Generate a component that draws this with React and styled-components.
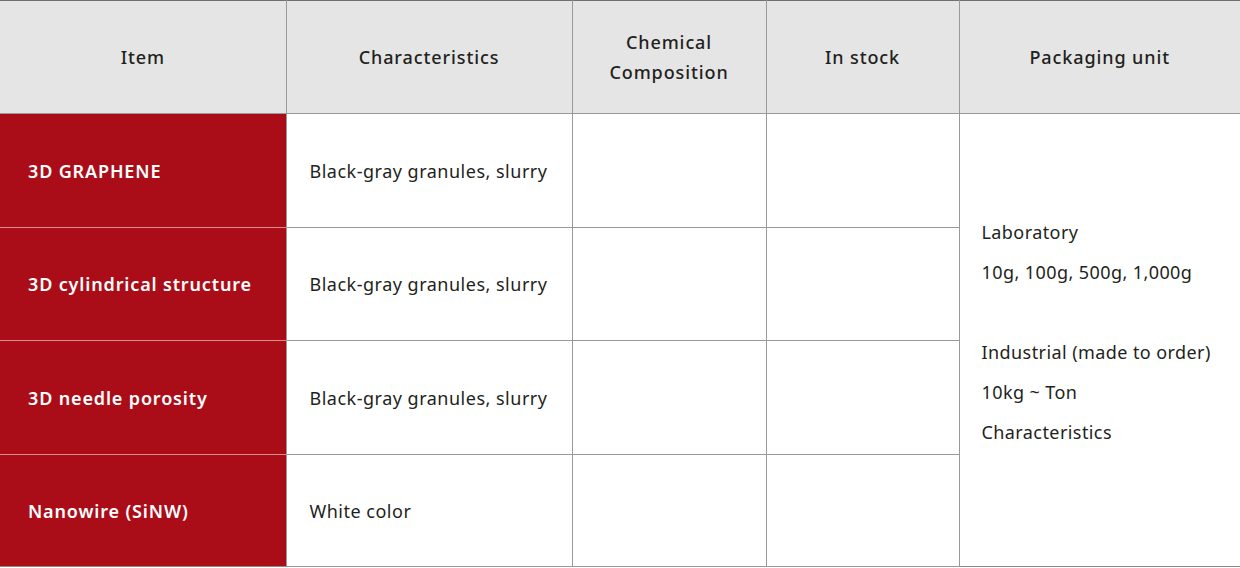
import React from "react";
import styled, { createGlobalStyle } from "styled-components";

const Global = createGlobalStyle`
  html, body { margin: 0; padding: 0; background: #fff; }
  body { font-family: "Noto Sans", "Open Sans", sans-serif; color: #231f20; }
`;

const Table = styled.table`
  width: 1240px;
  border-collapse: collapse;
  table-layout: fixed;
  border-top: 1px solid #707070;
  border-bottom: 1px solid #8a8a8a;
`;

const Head = styled.th`
  height: 112px;
  background: #e5e5e5;
  font-size: 18px;
  font-weight: 500;
  letter-spacing: 0.9px;
  line-height: 30px;
  text-align: center;
  color: #231f20;
  border-left: 1px solid #999;
  border-bottom: 1px solid #999;
  padding: 0;
  &:first-child { border-left: none; }
`;

const Row = styled.tr`
  height: ${(p) => p.$h}px;
`;

const ItemCell = styled.td`
  background: #ab0d18;
  color: #fff;
  font-size: 18px;
  font-weight: 600;
  letter-spacing: 0.85px;
  padding: 0 0 0 28px;
  border-bottom: 1px solid ${(p) => (p.$last ? "#8a8a8a" : "#d98b90")};
`;

const Cell = styled.td`
  font-size: 18px;
  letter-spacing: 0.5px;
  padding: 0 0 0 23px;
  border-left: 1px solid #999;
  border-bottom: 1px solid #999;
`;

const PackCell = styled.td`
  font-size: 18px;
  letter-spacing: 0.42px;
  line-height: 40px;
  padding: 0 0 16px 22px;
  border-left: 1px solid #999;
  vertical-align: middle;
`;

const Line = styled.div`
  height: 40px;
  white-space: nowrap;
`;

const rows = [
  ["3D GRAPHENE", "Black-gray granules, slurry", 114],
  ["3D cylindrical structure", "Black-gray granules, slurry", 113],
  ["3D needle porosity", "Black-gray granules, slurry", 114],
  ["Nanowire (SiNW)", "White color", 112],
];

const pack = [
  "Laboratory",
  "10g, 100g, 500g, 1,000g",
  "",
  "Industrial (made to order)",
  "10kg ~ Ton",
  "Characteristics",
];

export default function App() {
  return (
    <>
      <Global />
      <Table>
        <colgroup>
          <col style={{ width: 286 }} />
          <col style={{ width: 286 }} />
          <col style={{ width: 194 }} />
          <col style={{ width: 193 }} />
          <col style={{ width: 281 }} />
        </colgroup>
        <thead>
          <tr>
            <Head>Item</Head>
            <Head>Characteristics</Head>
            <Head>
              Chemical
              <br />
              Composition
            </Head>
            <Head>In stock</Head>
            <Head>Packaging unit</Head>
          </tr>
        </thead>
        <tbody>
          {rows.map(([item, ch, h], i) => (
            <Row key={item} $h={h}>
              <ItemCell $last={i === rows.length - 1}>{item}</ItemCell>
              <Cell>{ch}</Cell>
              <Cell />
              <Cell />
              {i === 0 && (
                <PackCell rowSpan={4}>
                  {pack.map((t, j) => (
                    <Line key={j}>{t}</Line>
                  ))}
                </PackCell>
              )}
            </Row>
          ))}
        </tbody>
      </Table>
    </>
  );
}
